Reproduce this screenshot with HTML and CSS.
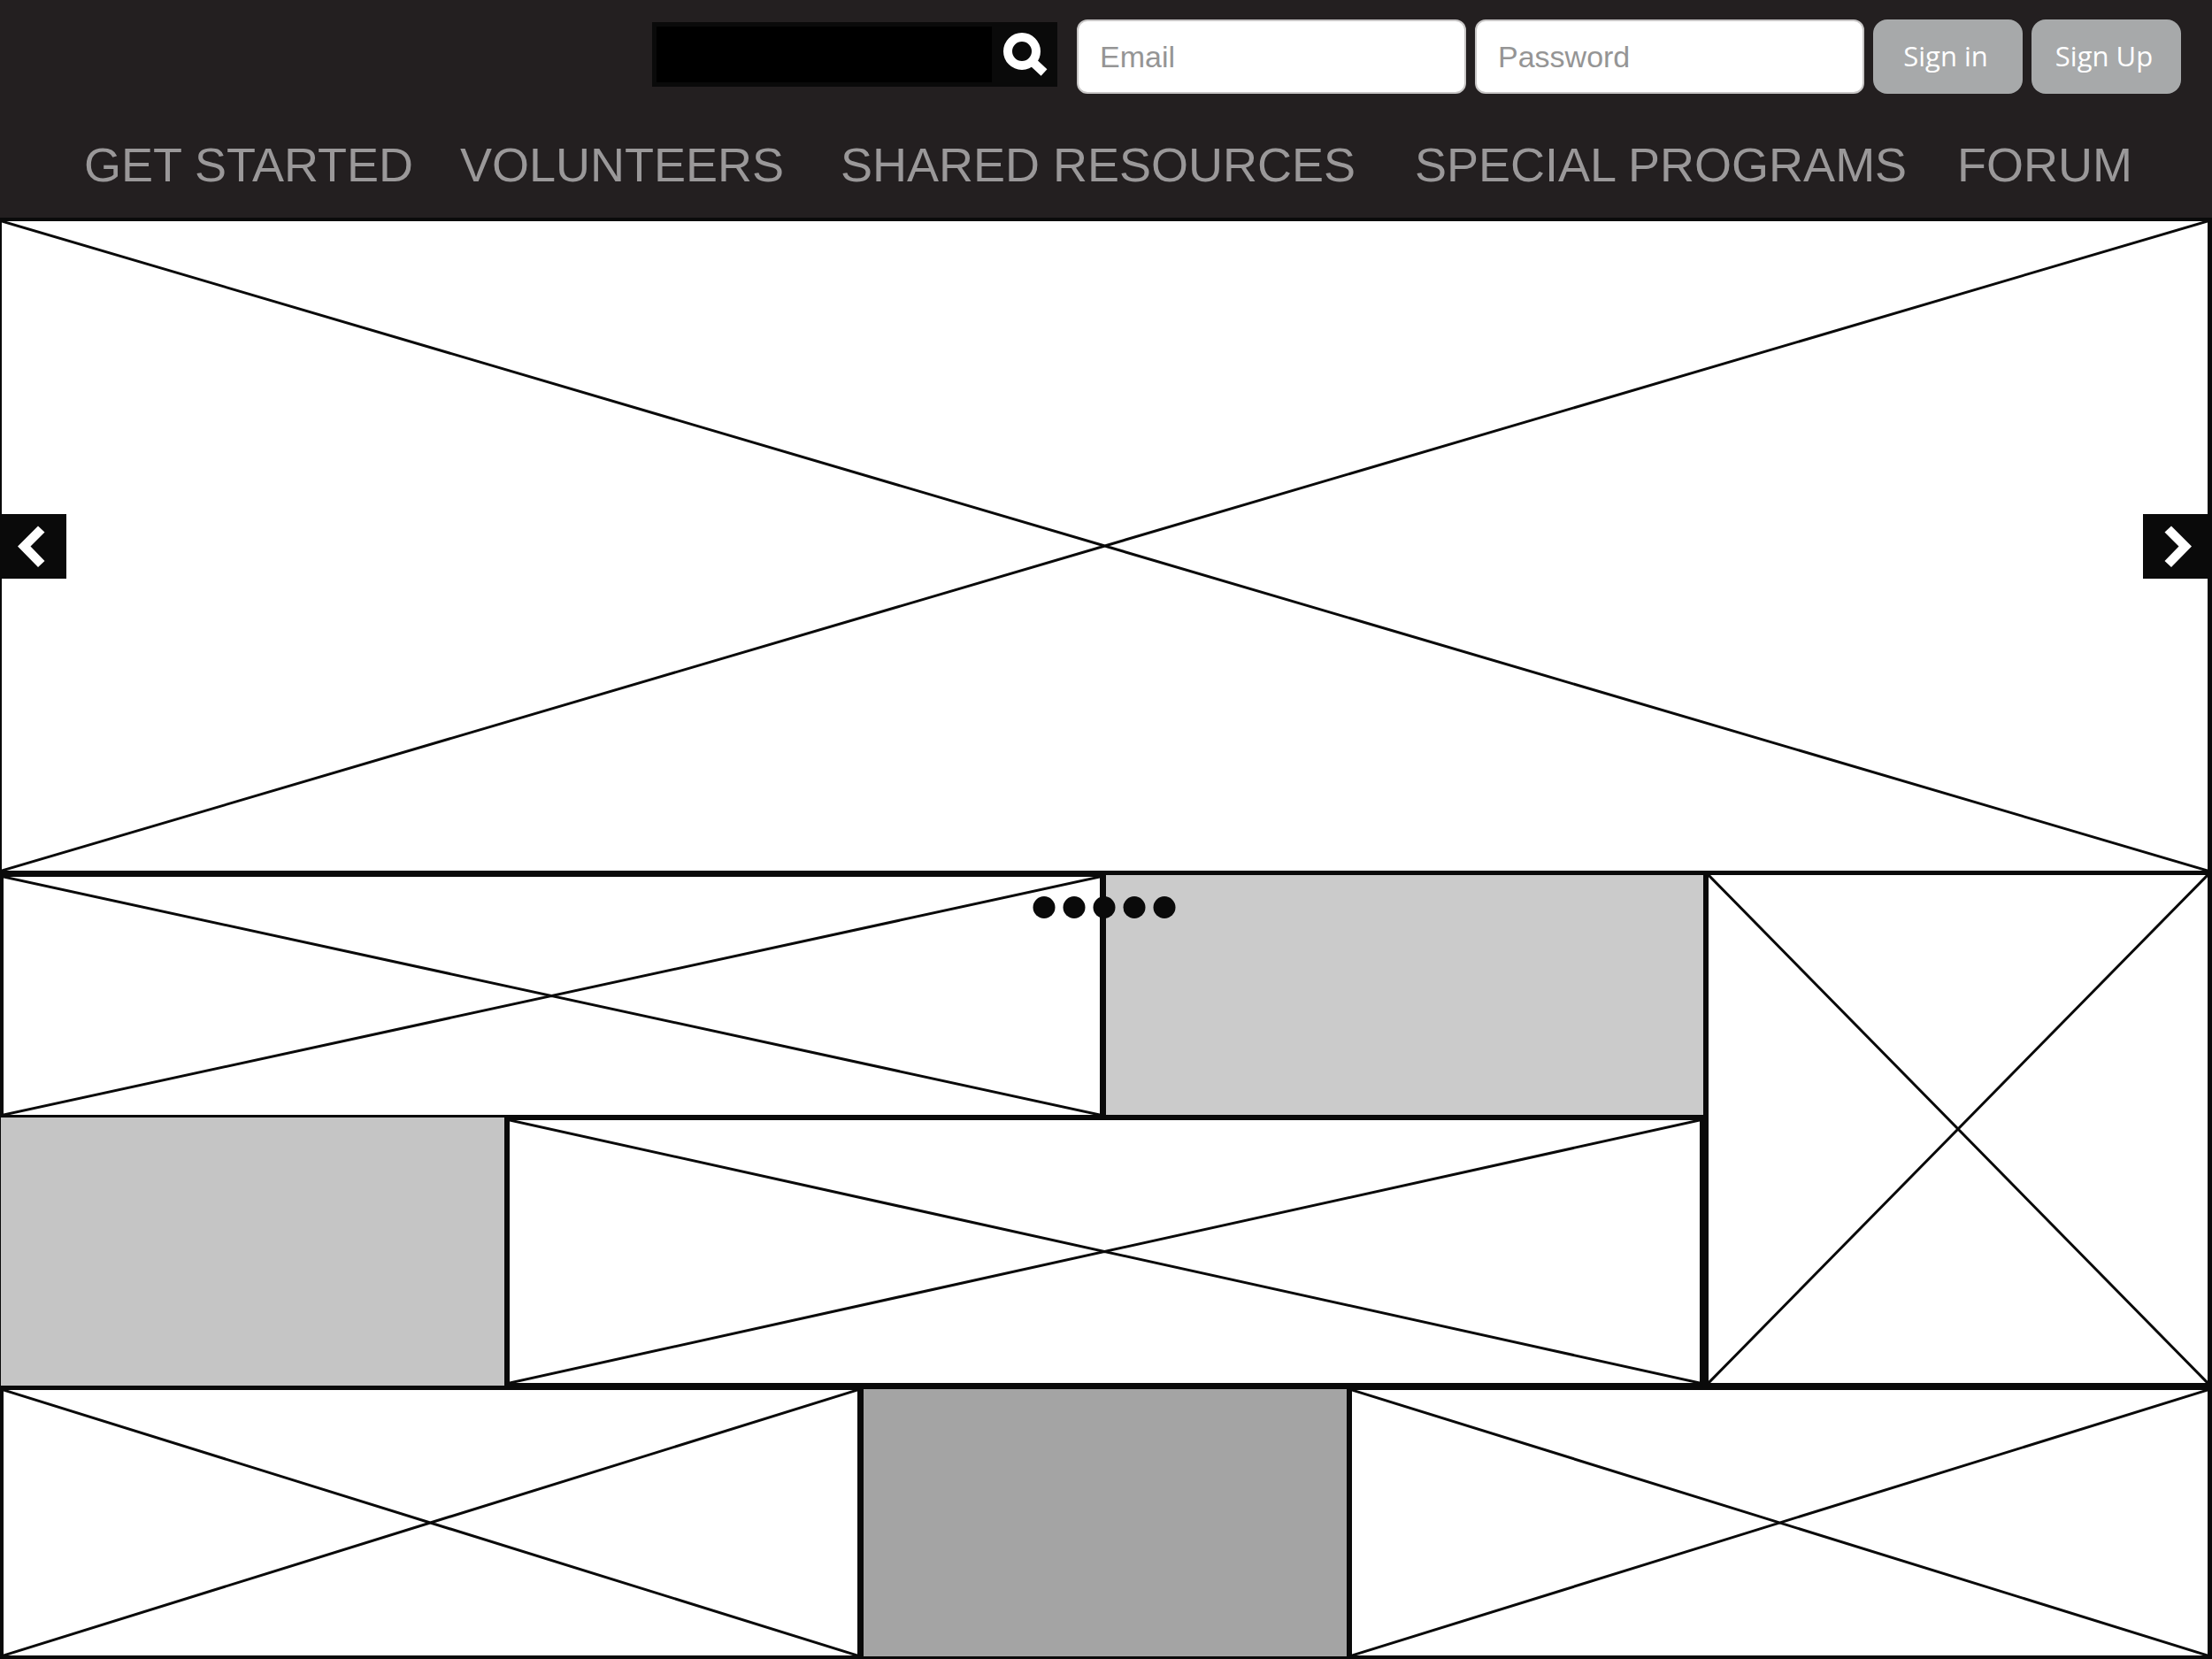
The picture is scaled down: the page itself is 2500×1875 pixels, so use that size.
FILE: index.html
```html
<!DOCTYPE html>
<html lang="en">
<head>
<meta charset="utf-8">
<title>Home</title>
<link rel="stylesheet" href="styles.css">
</head>
<body>
<header class="header">
  <div class="toolbar">
    <form class="search" role="search">
      <input class="search-input" type="search" aria-label="Search">
      <button class="search-button" type="submit" aria-label="Search">
        <svg viewBox="0 0 74 74" width="74" height="74" aria-hidden="true">
          <circle cx="34" cy="33" r="16" fill="none" stroke="#fff" stroke-width="10"/>
          <path d="M44 43L59 57" stroke="#fff" stroke-width="10"/>
        </svg>
      </button>
    </form>
    <form class="login">
      <input class="field" type="email" placeholder="Email" aria-label="Email">
      <input class="field" type="password" placeholder="Password" aria-label="Password">
      <button class="button" type="submit">Sign in</button>
      <button class="button" type="button">Sign Up</button>
    </form>
  </div>
  <nav class="nav">
    <a href="#">GET STARTED</a>
    <a href="#">VOLUNTEERS</a>
    <a href="#">SHARED RESOURCES</a>
    <a href="#">SPECIAL PROGRAMS</a>
    <a href="#">FORUM</a>
  </nav>
</header>
<main class="main">
  <section class="hero">
    <svg class="cross" viewBox="0 0 100 100" preserveAspectRatio="none" aria-hidden="true"><path d="M0 0L100 100M100 0L0 100"/></svg>
    <button class="arrow prev" type="button" aria-label="Previous slide">
      <svg viewBox="0 0 73 73" width="73" height="73" aria-hidden="true"><path d="M18 36.500L41 13.500L48.500 20.500L32.500 36.500L48.500 53L41 60Z" fill="#fff"/></svg>
    </button>
    <button class="arrow next" type="button" aria-label="Next slide">
      <svg viewBox="0 0 73 73" width="73" height="73" aria-hidden="true"><path d="M55 36.500L32 13.500L24.500 20.500L40.500 36.500L24.500 53L32 60Z" fill="#fff"/></svg>
    </button>
    <div class="dots">
      <button type="button" aria-label="Slide 1"></button>
      <button type="button" aria-label="Slide 2"></button>
      <button type="button" aria-label="Slide 3"></button>
      <button type="button" aria-label="Slide 4"></button>
      <button type="button" aria-label="Slide 5"></button>
    </div>
  </section>
  <section class="mosaic">
    <div class="tile tile-wide"><svg class="cross" viewBox="0 0 100 100" preserveAspectRatio="none" aria-hidden="true"><path d="M0 0L100 100M100 0L0 100"/></svg></div>
    <div class="tile tile-light"></div>
    <div class="tile tile-tall"><svg class="cross" viewBox="0 0 100 100" preserveAspectRatio="none" aria-hidden="true"><path d="M0 0L100 100M100 0L0 100"/></svg></div>
    <div class="tile tile-silver"></div>
    <div class="tile tile-middle"><svg class="cross" viewBox="0 0 100 100" preserveAspectRatio="none" aria-hidden="true"><path d="M0 0L100 100M100 0L0 100"/></svg></div>
  </section>
  <section class="strip">
    <div class="tile tile-first"><svg class="cross" viewBox="0 0 100 100" preserveAspectRatio="none" aria-hidden="true"><path d="M0 0L100 100M100 0L0 100"/></svg></div>
    <div class="tile tile-dark"></div>
    <div class="tile tile-last"><svg class="cross" viewBox="0 0 100 100" preserveAspectRatio="none" aria-hidden="true"><path d="M0 0L100 100M100 0L0 100"/></svg></div>
  </section>
</main>
</body>
</html>
```
FILE: styles.css
```css
* {
  box-sizing: border-box;
}

body {
  margin: 0;
  min-height: 100vh;
  display: flex;
  flex-direction: column;
  background: #0a0a0a;
  font-family: "Liberation Sans", Arial, sans-serif;
}

button {
  padding: 0;
  border: 0;
  cursor: pointer;
}

/* Header */
.header {
  background: #231f20;
  padding-top: 22px;
  height: 246px;
}

.toolbar {
  display: flex;
  justify-content: flex-end;
  align-items: flex-start;
  gap: 22px;
  padding-right: 35px;
}

.search {
  display: flex;
  width: 458px;
  height: 73px;
  margin-top: 3px;
  padding: 5px 0 5px 5px;
  background: #0a0a0a;
}

.search-input {
  flex: 1;
  min-width: 0;
  border: 0;
  padding: 0 16px;
  background: #000;
  color: #fff;
  font: 34px "Liberation Sans", Arial, sans-serif;
}

.search-button {
  width: 74px;
  height: 74px;
  margin-top: -5px;
  background: none;
}

.search-button svg,
.arrow svg {
  display: block;
}

.login {
  display: flex;
  gap: 10px;
}

.field {
  width: 440px;
  height: 84px;
  padding: 0 24px;
  border: 2px solid #c8c6c6;
  border-radius: 12px;
  background: #fff;
  color: #231f20;
  font: 34px "Liberation Sans", Arial, sans-serif;
}

.field::placeholder {
  color: #959595;
  opacity: 1;
}

.button {
  width: 169px;
  height: 84px;
  padding: 0 5px 2px 0;
  border-radius: 16px;
  background: #a7a9aa;
  color: #fff;
  font: 31px "Open Sans", sans-serif;
}

.nav {
  display: grid;
  grid-template-columns: 425fr 430fr 649fr 613fr 288fr;
  padding: 50px 0 0 95px;
}

.nav a {
  color: #9a9899;
  font-size: 54px;
  line-height: 60px;
  text-decoration: none;
  white-space: nowrap;
}

/* Page body */
.main {
  flex: 1;
  display: grid;
  grid-template-rows: 741fr 580fr 308fr;
}

.cross {
  display: block;
  position: absolute;
  inset: 0;
  width: 100%;
  height: 100%;
}

.cross path {
  fill: none;
  stroke: #0a0a0a;
  stroke-width: 3px;
  vector-effect: non-scaling-stroke;
}

.hero {
  position: relative;
  display: flex;
  align-items: center;
  justify-content: space-between;
  min-height: 300px;
  border: solid #0a0a0a;
  border-width: 4px 5px 3px 2px;
  background: #fff;
}

.arrow {
  position: relative;
  width: 73px;
  height: 73px;
  background: #0a0a0a;
}

.dots {
  position: absolute;
  z-index: 1;
  top: 100%;
  left: 50%;
  transform: translateX(-50%);
  display: flex;
  gap: 9px;
  padding: 29px 2px 0 0;
}

.dots button {
  width: 25px;
  height: 25px;
  border-radius: 50%;
  background: #0a0a0a;
}

/* Tiles */
.mosaic {
  display: grid;
  grid-template-columns: 573fr 674fr 681fr 572fr;
  grid-template-rows: 275fr 305fr;
}

.strip {
  display: grid;
  grid-template-columns: 973fr 552fr 975fr;
}

.tile {
  position: relative;
  min-height: 120px;
  border: 4px solid #0a0a0a;
  background: #fff;
}

.tile-wide {
  grid-column: span 2;
  border-bottom-width: 2px;
}

.tile-light {
  border-width: 2px 3px;
  background: #cbcbcb;
}

.tile-tall {
  grid-row: span 2;
  border-width: 2px 5px 4px 3px;
}

.tile-silver {
  border-width: 1px 3px 1px 1px;
  background: #c5c5c5;
}

.tile-middle {
  grid-column: span 2;
  border-width: 4px 7px 4px 3px;
}

.tile-dark {
  border-width: 3px;
  background: #a4a4a4;
}

.tile-last {
  border-width: 4px 5px 4px 3px;
}
```
